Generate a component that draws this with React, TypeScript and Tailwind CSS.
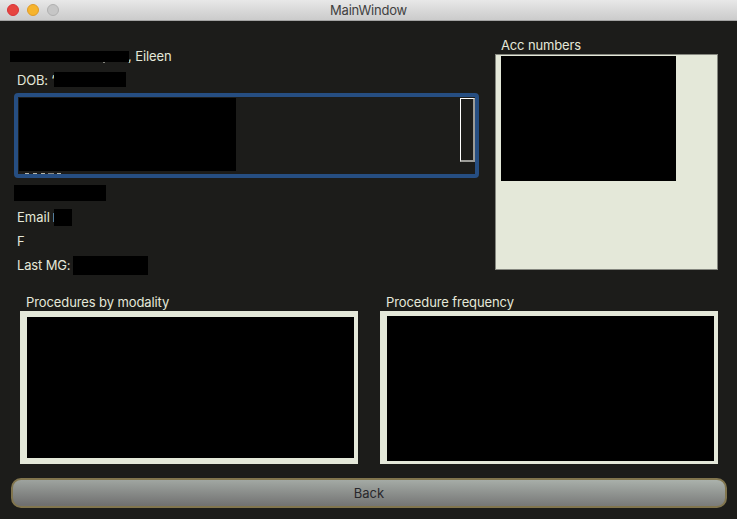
import React from "react";

function TrafficLight({ tone }: { tone: string }) {
  return <span className={`h-3 w-3 rounded-full border ${tone}`} />;
}

function TitleBar() {
  return (
    <header className="relative flex h-[21px] shrink-0 items-center justify-center border-b border-[#a3a3a3] bg-gradient-to-b from-[#e8e8e8] to-[#cbcbcb] text-[#414141]">
      <div className="absolute top-1 left-[7px] flex gap-2">
        <TrafficLight tone="border-[#d93238] bg-[#e6453f]" />
        <TrafficLight tone="border-[#e09b27] bg-[#f6b42d]" />
        <TrafficLight tone="border-[#b0b0b0] bg-[#c6c6c6]" />
      </div>
      <h1 className="tracking-[-0.2px]">MainWindow</h1>
    </header>
  );
}

function NotesBox() {
  return (
    <div className="ml-[14px] flex h-[85px] w-[465px] justify-between rounded-[4px] border-4 border-[#264e82] bg-[#1c1c1a]">
      <div className="ml-px mt-px">
        <div className="h-[73px] w-[217px] bg-black" />
        <div className="mt-[2px] ml-[6px] flex h-px gap-[4px]">
          <i className="w-[4px] bg-[#b5b5a8]" />
          <i className="w-[4px] bg-[#b5b5a8]" />
          <i className="w-[4px] bg-[#b5b5a8]" />
          <i className="-ml-[1px] w-[6px] bg-[#8a8a84]" />
          <i className="-ml-[1px] w-[4px] bg-[#b5b5a8]" />
        </div>
      </div>
      <div className="mt-px h-[64px] w-[15px] border-t border-r-2 border-b-2 border-l border-t-white border-r-[#9b9b97] border-b-[#9b9b97] border-l-white" />
    </div>
  );
}

function PatientDetails() {
  return (
    <section className="w-[495px] pt-[23px]">
      <div className="mb-px flex h-6 items-start pl-[10px]">
        <div className="relative mt-[7px] h-[11px] w-[119px] bg-black">
          <i className="absolute top-[11px] left-[93px] h-px w-[2px] bg-[#85857e]" />
        </div>
        <span className="-ml-[1px] mt-[4px] tracking-[-0.1px]">, Eileen</span>
      </div>
      <div className="flex h-6 items-start pl-[17px]">
        <span className="mt-[3px] w-[37px] whitespace-nowrap tracking-[-0.2px]">DOB: ‘</span>
        <div className="mt-[3px] h-[15px] w-[72px] bg-black" />
      </div>
      <NotesBox />
      <div className="mt-[7px] ml-[14px] h-4 w-[92px] bg-black" />
      <div className="mt-1 flex h-6 items-center pl-[17px]">
        <span className="w-[36px]">Email</span>
        <i className="h-[9px] w-px bg-[#547d9c]" />
        <div className="h-[17px] w-[18px] bg-black" />
      </div>
      <div className="flex h-6 items-center pl-[17px]">F</div>
      <div className="flex h-6 items-center pl-[17px]">
        <span className="w-14 whitespace-nowrap tracking-[-0.15px]">Last MG:</span>
        <div className="h-[19px] w-[75px] bg-black" />
      </div>
    </section>
  );
}

function AccNumbers() {
  return (
    <section className="w-[223px] pt-[15px]">
      <h2 className="h-[18px] pl-[6px] leading-[18px] tracking-[-0.15px]">Acc numbers</h2>
      <div className="h-[216px] border border-[#85877f] bg-[#e4e8d9] pt-px pl-[5px]">
        <div className="h-[125px] w-[175px] bg-black" />
      </div>
    </section>
  );
}

function ChartPanel({ title, inset }: { title: string; inset: string }) {
  return (
    <section className="w-[338px]">
      <h2 className="h-[18px] pl-[6px] leading-[18px] tracking-[-0.1px]">{title}</h2>
      <div className={`h-[153px] bg-[#e4e8d9] pr-1 pl-[7px] ${inset}`}>
        <div className="h-full bg-black" />
      </div>
    </section>
  );
}

export default function App() {
  return (
    <div className="flex h-[519px] w-[737px] flex-col overflow-hidden bg-[#1c1c1a] font-['Inter',sans-serif] text-[13px] leading-4 text-[#e4e8d9]">
      <TitleBar />
      <main className="flex flex-1 flex-col">
        <div className="flex h-[272px]">
          <PatientDetails />
          <AccNumbers />
        </div>
        <div className="flex gap-[22px] pl-5">
          <ChartPanel title="Procedures by modality" inset="pt-[6px] pb-[6px]" />
          <ChartPanel title="Procedure frequency" inset="pt-[5px] pb-[3px]" />
        </div>
        <button className="mt-[14px] ml-[11px] h-[30px] w-[716px] rounded-[10px] border-2 border-[#81754e] bg-[linear-gradient(180.6deg,#abb2ac_0%,#707070_95%)] text-[#28282c]">
          Back
        </button>
      </main>
    </div>
  );
}
